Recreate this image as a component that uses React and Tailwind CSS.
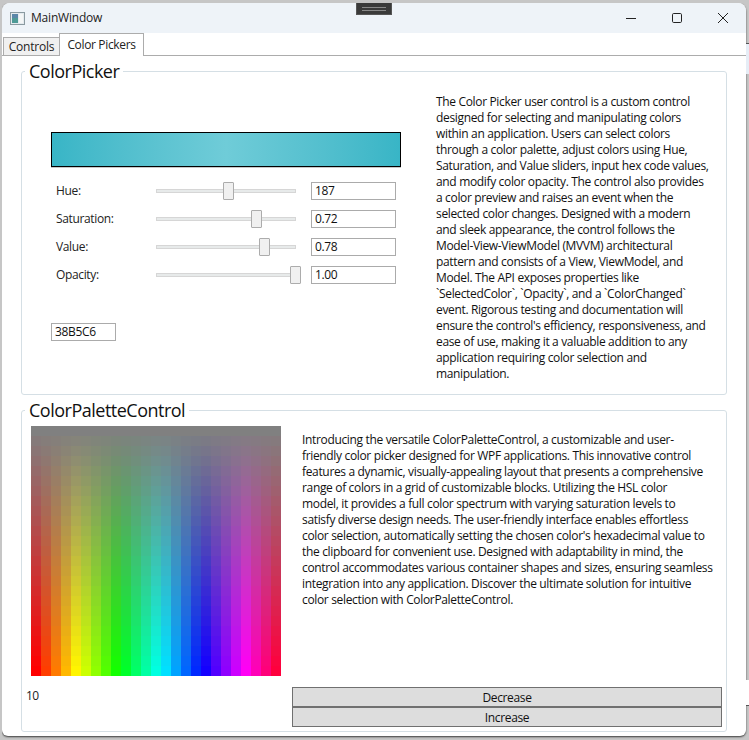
import React from 'react';

const pickerText = [
  'The Color Picker user control is a custom control',
  'designed for selecting and manipulating colors',
  'within an application. Users can select colors',
  'through a color palette, adjust colors using Hue,',
  'Saturation, and Value sliders, input hex code values,',
  'and modify color opacity. The control also provides',
  'a color preview and raises an event when the',
  'selected color changes. Designed with a modern',
  'and sleek appearance, the control follows the',
  'Model-View-ViewModel (MVVM) architectural',
  'pattern and consists of a View, ViewModel, and',
  'Model. The API exposes properties like',
  '`SelectedColor`, `Opacity`, and a `ColorChanged`',
  'event. Rigorous testing and documentation will',
  "ensure the control's efficiency, responsiveness, and",
  'ease of use, making it a valuable addition to any',
  'application requiring color selection and',
  'manipulation.',
];

const paletteText = [
  'Introducing the versatile ColorPaletteControl, a customizable and user-',
  'friendly color picker designed for WPF applications. This innovative control',
  'features a dynamic, visually-appealing layout that presents a comprehensive',
  'range of colors in a grid of customizable blocks. Utilizing the HSL color',
  'model, it provides a full color spectrum with varying saturation levels to',
  'satisfy diverse design needs. The user-friendly interface enables effortless',
  "color selection, automatically setting the chosen color's hexadecimal value to",
  'the clipboard for convenient use. Designed with adaptability in mind, the',
  'control accommodates various container shapes and sizes, ensuring seamless',
  'integration into any application. Discover the ultimate solution for intuitive',
  'color selection with ColorPaletteControl.',
];

const sliders = [
  { label: 'Hue:', value: '187', thumb: 67 },
  { label: 'Saturation:', value: '0.72', thumb: 95 },
  { label: 'Value:', value: '0.78', thumb: 103 },
  { label: 'Opacity:', value: '1.00', thumb: 134 },
];

const cells = [];
for (let row = 0; row < 25; row++) {
  for (let col = 0; col < 25; col++) {
    cells.push(`hsl(${(col * 360) / 25}, ${(row / 24) * 100}%, 50%)`);
  }
}

const Lines = ({ lines }) => (
  <div className="text-[12px] leading-[16px] tracking-[-0.34px] text-[#111] whitespace-nowrap">
    {lines.map((line) => (
      <div key={line}>{line}</div>
    ))}
  </div>
);

const Group = ({ title, className, children }) => (
  <div className={`relative border border-[#d5dfe5] rounded-[3px] ${className}`}>
    <div className="absolute left-[3px] top-[-13px] bg-white px-[4px] text-[18px] leading-[24px] tracking-[-0.5px] text-[#111]">
      {title}
    </div>
    {children}
  </div>
);

const Field = ({ value, className }) => (
  <input
    readOnly
    value={value}
    className={`h-[18px] border border-[#ababab] bg-white pl-[3px] text-[12px] tracking-[-0.35px] text-[#111] outline-none ${className}`}
  />
);

export default function App() {
  return (
    <div
      className="w-[749px] h-[740px] overflow-hidden bg-[#c6c6c6] border-t-[3px] border-l-[2px] border-[#c6c6c6] relative"
      style={{ fontFamily: '"Open Sans", "Noto Sans", sans-serif' }}
    >
      {/* window behind, peeking out on the right */}
      <div className="absolute left-[744px] top-[40px] w-[3px] h-px bg-[#555]" />
      <div className="absolute left-[744px] top-[41px] w-[3px] h-[30px] bg-[#e6edf6]" />
      <div className="absolute left-[744px] top-[677px] w-[3px] h-[25px] bg-white" />
      <div className="absolute left-[744px] top-[702px] w-[3px] h-px bg-[#555]" />

      <div className="absolute left-[354px] top-[-1px] w-[36px] h-[13px] bg-[#3a3a3a] border border-[#555] flex flex-col items-center justify-center gap-[2px]">
        <div className="w-[24px] h-px bg-[#888]" />
        <div className="w-[24px] h-px bg-[#888]" />
      </div>

      <div className="w-[744px] h-[733px] bg-white rounded-t-[8px] rounded-b-[6px] shadow-[0_1px_2px_rgba(0,0,0,0.7)] overflow-hidden">
        {/* title bar */}
        <div className="h-[30px] bg-[#eef3f8] flex items-center">
          <svg width="15" height="13" viewBox="0 0 15 13" className="ml-[8px]">
            <rect x="0.5" y="0.5" width="14" height="12" fill="#e4eaee" stroke="#8a9aa0" />
            <rect x="2" y="2" width="6" height="9" fill="#4e9a96" />
            <rect x="2" y="2" width="6" height="4" fill="#5a86a8" />
            <rect x="9" y="2" width="4" height="9" fill="#f4f6f6" />
          </svg>
          <span className="ml-[6px] text-[12px] tracking-[-0.2px] text-[#222]">MainWindow</span>
          <div className="ml-auto flex items-center text-[#222]">
            <svg width="12" height="12" viewBox="0 0 12 12" className="mr-[34px]">
              <path d="M1 6.5h10" stroke="currentColor" />
            </svg>
            <svg width="12" height="12" viewBox="0 0 12 12" className="mr-[34px]">
              <rect x="1.5" y="1.5" width="9" height="9" rx="1.2" fill="none" stroke="currentColor" />
            </svg>
            <svg width="12" height="12" viewBox="0 0 12 12" className="mr-[17px]">
              <path d="M1 1l10 10M11 1L1 11" stroke="currentColor" fill="none" />
            </svg>
          </div>
        </div>

        {/* tabs */}
        <div className="h-[23px] flex items-end pl-[1px] border-b border-[#acacac]">
          <div className="h-[19px] mb-[-1px] w-[57px] bg-[#f0f0f0] border border-[#acacac] text-[12px] tracking-[-0.2px] text-[#222] flex items-center justify-center">
            Controls
          </div>
          <div className="relative h-[23px] mb-[-1px] ml-[-1px] w-[85px] bg-white border border-b-0 border-[#acacac] text-[12px] tracking-[-0.35px] text-[#222] flex items-center justify-center">
            Color Pickers
          </div>
        </div>

        <div className="px-[19px] pt-[15px] flex flex-col gap-[15px]">
          <Group title="ColorPicker" className="h-[324px] flex">
            <div className="ml-[29px] mt-[60px] w-[350px]">
              <div className="h-[35px] border border-black bg-gradient-to-r from-[#38b5c6] via-[#6fccd8] to-[#38b5c6] shadow-[0_1px_0_#c8c8c8]" />
              <div className="mt-[15px] flex flex-col gap-[10px]">
                {sliders.map((s) => (
                  <div key={s.label} className="flex items-center h-[18px]">
                    <div className="w-[105px] pl-[5px] text-[12px] tracking-[-0.35px] text-[#222]">{s.label}</div>
                    <div className="relative w-[140px] h-[18px] flex items-center">
                      <div className="w-full h-[4px] bg-[#e7eaea] border border-[#d6d6d6]" />
                      <div
                        className="absolute top-0 w-[11px] h-[18px] bg-[#f0f0f0] border border-[#acacac] rounded-[1px]"
                        style={{ left: s.thumb }}
                      />
                    </div>
                    <Field value={s.value} className="ml-[15px] w-[85px]" />
                  </div>
                ))}
              </div>
              <Field value="38B5C6" className="mt-[39px] w-[65px] block" />
            </div>
            <div className="ml-[35px] mt-[22px]">
              <Lines lines={pickerText} />
            </div>
          </Group>

          <Group title="ColorPaletteControl" className="h-[322px]">
            <div className="flex">
              <div className="ml-[9px] mt-[15px] w-[250px] h-[250px] grid grid-cols-[repeat(25,10px)] grid-rows-[repeat(25,10px)]">
                {cells.map((color, i) => (
                  <div key={i} style={{ backgroundColor: color }} />
                ))}
              </div>
              <div className="ml-[21px] mt-[21px]">
                <Lines lines={paletteText} />
              </div>
            </div>
            <div className="flex mt-[11px]">
              <div className="w-[270px] pl-[4px] text-[12px] tracking-[-0.6px] text-[#222]">10</div>
              <div className="w-[430px]">
                <div className="h-[20px] pt-[2px] bg-[#dddddd] border border-[#707070] text-[12px] tracking-[-0.35px] text-[#111] flex items-center justify-center">
                  Decrease
                </div>
                <div className="h-[20px] pt-[2px] bg-[#dddddd] border border-[#707070] text-[12px] tracking-[-0.35px] text-[#111] flex items-center justify-center">
                  Increase
                </div>
              </div>
            </div>
          </Group>
        </div>
      </div>
    </div>
  );
}
